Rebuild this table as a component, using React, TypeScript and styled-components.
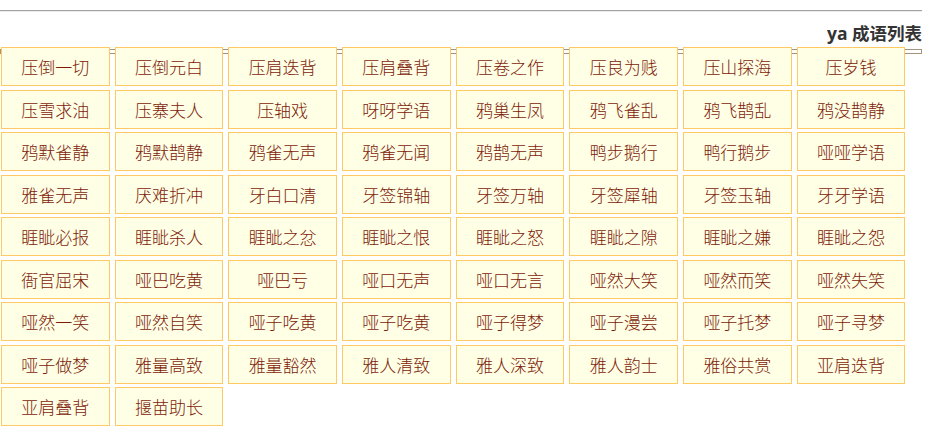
import React from "react";
import styled, { createGlobalStyle } from "styled-components";

const GlobalStyle = createGlobalStyle`
  html, body {
    margin: 0;
    padding: 0;
    background: #ffffff;
  }
  body {
    font-family: "Liberation Sans", "Noto Sans CJK SC", sans-serif;
  }
`;

const Page = styled.div`
  width: 922px;
  padding-top: 10px;
`;

const Rule = styled.div`
  height: 0;
  border-top: 1px solid #a3a3a3;
  border-bottom: 1px solid #ececec;
`;

const Title = styled.h2`
  margin: 0;
  height: 35px;
  padding-top: 9px;
  box-sizing: border-box;
  text-align: right;
  font-size: 17.5px;
  line-height: 24px;
  font-weight: bold;
  color: #333333;
  font-family: "Open Sans", "Noto Sans CJK SC", sans-serif;
`;

const Strip = styled.div`
  margin-top: 2px;
  height: 3px;
  border: 1px solid #a6917c;
`;

const Grid = styled.ul`
  list-style: none;
  margin: -7px 0 0 0;
  padding: 0 0 0 1px;
  display: grid;
  grid-template-columns: repeat(8, 108.5px);
  column-gap: 5.2px;
  row-gap: 3.5px;
`;

const Cell = styled.li`
  box-sizing: border-box;
  height: 39px;
  border: 1px solid #ffc966;
  background: #ffffe6;
  color: #7d1a08;
  font-family: "Noto Sans CJK SC", sans-serif;
  font-size: 17px;
  font-weight: 300;
  display: flex;
  align-items: center;
  justify-content: center;
`;

const idioms = [
  "压倒一切", "压倒元白", "压肩迭背", "压肩叠背", "压卷之作", "压良为贱", "压山探海", "压岁钱",
  "压雪求油", "压寨夫人", "压轴戏", "呀呀学语", "鸦巢生凤", "鸦飞雀乱", "鸦飞鹊乱", "鸦没鹊静",
  "鸦默雀静", "鸦默鹊静", "鸦雀无声", "鸦雀无闻", "鸦鹊无声", "鸭步鹅行", "鸭行鹅步", "哑哑学语",
  "雅雀无声", "厌难折冲", "牙白口清", "牙签锦轴", "牙签万轴", "牙签犀轴", "牙签玉轴", "牙牙学语",
  "睚眦必报", "睚眦杀人", "睚眦之忿", "睚眦之恨", "睚眦之怒", "睚眦之隙", "睚眦之嫌", "睚眦之怨",
  "衙官屈宋", "哑巴吃黄", "哑巴亏", "哑口无声", "哑口无言", "哑然大笑", "哑然而笑", "哑然失笑",
  "哑然一笑", "哑然自笑", "哑子吃黄", "哑子吃黄", "哑子得梦", "哑子漫尝", "哑子托梦", "哑子寻梦",
  "哑子做梦", "雅量高致", "雅量豁然", "雅人清致", "雅人深致", "雅人韵士", "雅俗共赏", "亚肩迭背",
  "亚肩叠背", "揠苗助长",
];

export default function App() {
  return (
    <>
      <GlobalStyle />
      <Page>
        <Rule />
        <Title>ya 成语列表</Title>
        <Strip />
        <Grid>
          {idioms.map((w, i) => (
            <Cell key={i}>{w}</Cell>
          ))}
        </Grid>
      </Page>
    </>
  );
}
